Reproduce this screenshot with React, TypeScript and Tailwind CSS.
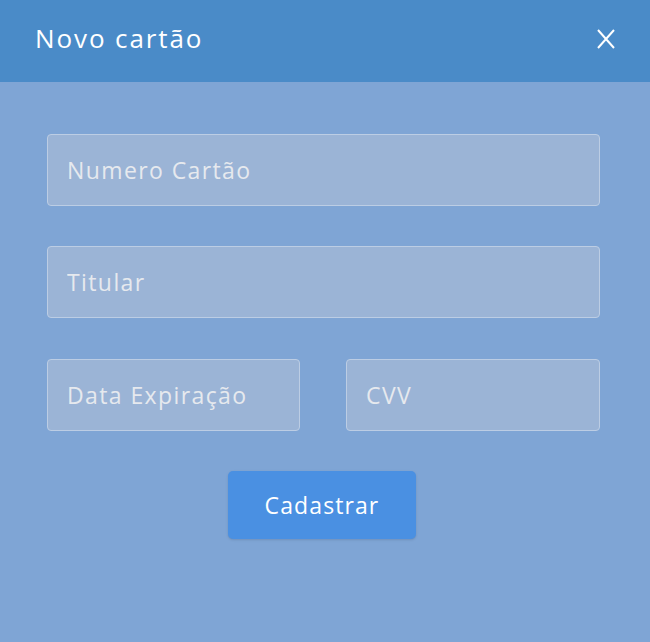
export default function App() {
  const font = { fontFamily: '"Open Sans", Lato, sans-serif' };
  const field =
    "h-[72px] rounded-[4px] border border-[#bccde4] bg-[#9bb4d6] px-[19px] text-[23px] tracking-[1.4px] text-white placeholder:text-[#e6e9ee] outline-none";
  return (
    <div className="w-[650px] h-[642px] bg-[#7fa5d5] flex flex-col" style={font}>
      {/* Cabeçalho */}
      <div className="h-[82px] bg-[#4a8bc8] flex items-center justify-between pl-[35px] pr-[34px]">
        <h1 className="text-[26px] text-white tracking-[1.9px] pb-[5px]">Novo cartão</h1>
        <button className="text-white pb-[4px]">
          <svg width="20" height="20" viewBox="0 0 20 20" fill="none" stroke="white" strokeWidth="2">
            <path d="M2 1 L18 19 M18 1 L2 19" />
          </svg>
        </button>
      </div>

      {/* Formulário */}
      <form className="flex flex-col pl-[47px] pr-[50px] pt-[52px]">
        <input placeholder="Numero Cartão" className={`${field} w-full`} />
        <input placeholder="Titular" className={`${field} w-full mt-[40px]`} />
        <div className="flex gap-[46px] mt-[41px]">
          <input placeholder="Data Expiração" className={`${field} w-[253px]`} />
          <input placeholder="CVV" className={`${field} w-[254px]`} />
        </div>
        <div className="flex justify-center mt-[40px] pr-[3px]">
          <button
            type="button"
            className="w-[188px] h-[68px] rounded-[5px] bg-[#4a90e2] text-white text-[23px] tracking-[1.1px] shadow-sm"
          >
            Cadastrar
          </button>
        </div>
      </form>
    </div>
  );
}
